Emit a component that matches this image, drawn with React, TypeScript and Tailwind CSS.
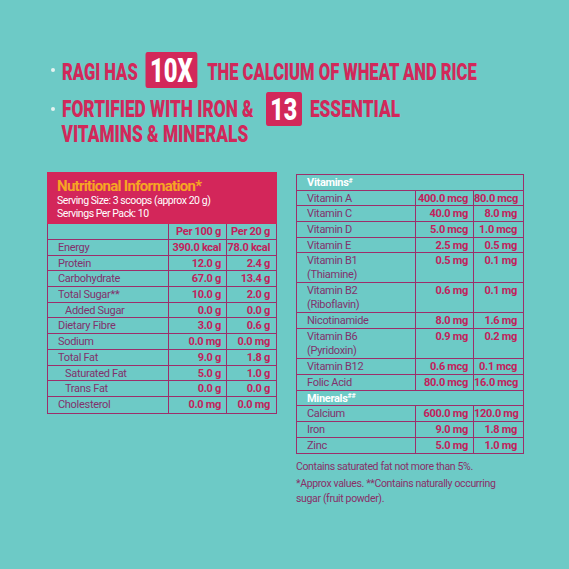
import React from 'react';

const body = "font-['Roboto',sans-serif]";

type Row = { label: string; a: string; b: string; indent?: boolean; sub?: string };

const nutrition: Row[] = [
  { label: 'Energy', a: '390.0 kcal', b: '78.0 kcal' },
  { label: 'Protein', a: '12.0 g', b: '2.4 g' },
  { label: 'Carbohydrate', a: '67.0 g', b: '13.4 g' },
  { label: 'Total Sugar**', a: '10.0 g', b: '2.0 g' },
  { label: 'Added Sugar', a: '0.0 g', b: '0.0 g', indent: true },
  { label: 'Dietary Fibre', a: '3.0 g', b: '0.6 g' },
  { label: 'Sodium', a: '0.0 mg', b: '0.0 mg' },
  { label: 'Total Fat', a: '9.0 g', b: '1.8 g' },
  { label: 'Saturated Fat', a: '5.0 g', b: '1.0 g', indent: true },
  { label: 'Trans Fat', a: '0.0 g', b: '0.0 g', indent: true },
  { label: 'Cholesterol', a: '0.0 mg', b: '0.0 mg' },
];

const vitamins: Row[] = [
  { label: 'Vitamin A', a: '400.0 mcg', b: '80.0 mcg' },
  { label: 'Vitamin C', a: '40.0 mg', b: '8.0 mg' },
  { label: 'Vitamin D', a: '5.0 mcg', b: '1.0 mcg' },
  { label: 'Vitamin E', a: '2.5 mg', b: '0.5 mg' },
  { label: 'Vitamin B1', sub: '(Thiamine)', a: '0.5 mg', b: '0.1 mg' },
  { label: 'Vitamin B2', sub: '(Riboflavin)', a: '0.6 mg', b: '0.1 mg' },
  { label: 'Nicotinamide', a: '8.0 mg', b: '1.6 mg' },
  { label: 'Vitamin B6', sub: '(Pyridoxin)', a: '0.9 mg', b: '0.2 mg' },
  { label: 'Vitamin B12', a: '0.6 mcg', b: '0.1 mcg' },
  { label: 'Folic Acid', a: '80.0 mcg', b: '16.0 mcg' },
];

const minerals: Row[] = [
  { label: 'Calcium', a: '600.0 mg', b: '120.0 mg' },
  { label: 'Iron', a: '9.0 mg', b: '1.8 mg' },
  { label: 'Zinc', a: '5.0 mg', b: '1.0 mg' },
];

function NutriRow({ r, cols, last }: { r: Row; cols: string; last?: boolean }) {
  return (
    <div
      className={`grid ${cols} ${last ? '' : 'border-b border-[#9c2f6a]'} ${r.sub ? 'h-[30px]' : 'h-[15.7px]'} whitespace-nowrap text-[11px] leading-[14px] tracking-[-0.3px]`}
    >
      <div className={`${r.indent ? 'pl-[17px]' : 'pl-[10px]'} pt-[1px] text-[#82316c]`}>
        {r.label}
        {r.sub && <div>{r.sub}</div>}
      </div>
      <div className="border-l border-[#9c2f6a] pr-[5px] pt-[1px] text-right font-bold text-[#c3215b]">{r.a}</div>
      <div className="border-l border-[#9c2f6a] pr-[6px] pt-[1px] text-right font-bold text-[#c3215b]">{r.b}</div>
    </div>
  );
}

function Bullet() {
  return <span className="mr-[7px] h-[4px] w-[4px] shrink-0 rounded-full bg-[#e6f3f1]" />;
}

export default function App() {
  const leftCols = 'grid-cols-[120px_58px_1fr]';
  const rightCols = 'grid-cols-[118px_58px_1fr]';
  return (
    <div className={`h-[569px] w-[569px] overflow-hidden bg-[#6dcac6] ${body}`}>
      {/* headline */}
      <div className="pl-[51px] pt-[52px] font-black uppercase text-[#d2285a]">
        <div className="flex h-[36px] items-center">
          <Bullet />
          <div className="flex w-max origin-left scale-x-[0.72] items-center whitespace-nowrap text-[23px] leading-none">
            <span className="pt-[5px]">Ragi has</span>
            <span className="ml-[11px] flex h-[36px] items-center rounded-[3px] bg-[#d2285a] px-[6px] text-[33px] text-white">10X</span>
            <span className="ml-[14px] pt-[5px]">The calcium of wheat and rice</span>
          </div>
        </div>
        <div className="mt-[4px] flex h-[34px] items-center">
          <Bullet />
          <div className="flex w-max origin-left scale-x-[0.75] items-center whitespace-nowrap text-[23px] leading-none">
            <span>Fortified with iron &amp;</span>
            <span className="ml-[16px] flex h-[34px] items-center rounded-[3px] bg-[#d2285a] px-[6px] text-[31px] text-white">13</span>
            <span className="ml-[11px]">Essential</span>
          </div>
        </div>
        <div className="mt-[-3px] w-max origin-left scale-x-[0.75] whitespace-nowrap pl-[14px] text-[23px] leading-none">
          Vitamins &amp; minerals
        </div>
      </div>

      <div className="mt-[26px] flex items-start pl-[47px]">
        {/* left table */}
        <div className="w-[230px]">
          <div className="h-[52px] whitespace-nowrap bg-[#d3265a] pl-[10px] pt-[5px]">
            <div className="text-[15px] font-bold leading-[18px] tracking-[-0.7px] text-[#f6a623]">Nutritional Information*</div>
            <div className="text-[10.5px] leading-[12.5px] tracking-[-0.45px] text-white">Serving Size: 3 scoops (approx 20 g)</div>
            <div className="text-[10.5px] leading-[12.5px] tracking-[-0.45px] text-white">Servings Per Pack: 10</div>
          </div>
          <div className="border-x border-b border-[#9c2f6a]">
            <div
              className={`grid ${leftCols} h-[16px] whitespace-nowrap border-b border-[#9c2f6a] text-[11px] font-bold leading-[14px] tracking-[-0.3px] text-[#c3215b]`}
            >
              <div />
              <div className="border-l border-[#9c2f6a] pr-[5px] pt-[1px] text-right">Per 100 g</div>
              <div className="border-l border-[#9c2f6a] pr-[6px] pt-[1px] text-right">Per 20 g</div>
            </div>
            {nutrition.map((r, i) => (
              <NutriRow key={r.label} r={r} cols={leftCols} last={i === nutrition.length - 1} />
            ))}
          </div>
        </div>

        {/* right table */}
        <div className="ml-[19px] mt-[2px] w-[228px]">
          <div className="border border-[#9c2f6a]">
            <div className="h-[15.7px] border-b border-[#9c2f6a] pl-[10px] pt-[1px] text-[11px] font-bold leading-[14px] tracking-[-0.3px] text-white">
              Vitamins<sup className="text-[7px]">#</sup>
            </div>
            {vitamins.map((r) => (
              <NutriRow key={r.label} r={r} cols={rightCols} />
            ))}
            <div className="h-[15.7px] border-b border-[#9c2f6a] pl-[10px] pt-[1px] text-[11px] font-bold leading-[14px] tracking-[-0.3px] text-white">
              Minerals<sup className="text-[7px]">##</sup>
            </div>
            {minerals.map((r, i) => (
              <NutriRow key={r.label} r={r} cols={rightCols} last={i === minerals.length - 1} />
            ))}
          </div>
          <div className="mt-[5px] text-[10.5px] leading-[15px] tracking-[-0.35px] text-[#8a2f68]">
            <div>Contains saturated fat not more than 5%.</div>
            <div className="mt-[2px]">
              *Approx values. **Contains naturally occurring
              <br />
              sugar (fruit powder).
            </div>
          </div>
        </div>
      </div>
    </div>
  );
}
